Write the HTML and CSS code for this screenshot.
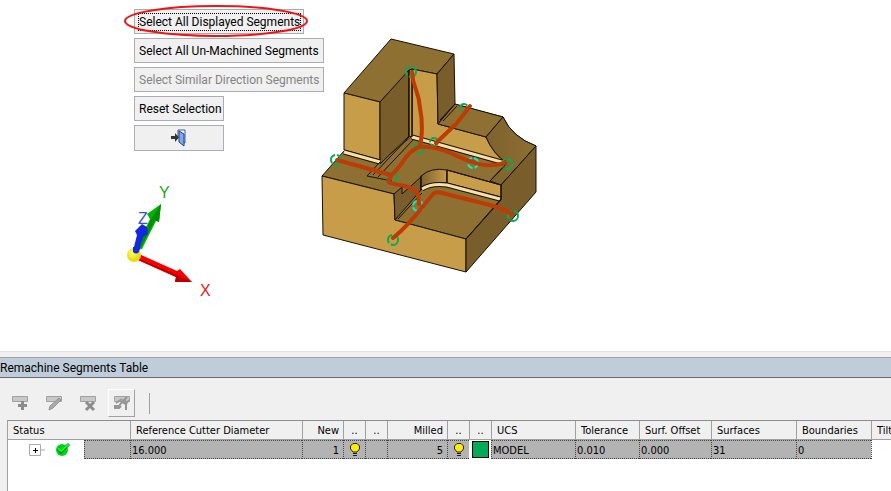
FILE: index.html
```html
<!DOCTYPE html>
<html lang="en">
<head>
<meta charset="utf-8">
<title>Remachine Segments</title>
<link rel="stylesheet" href="styles.css">
</head>
<body>
<main class="scene">
  <svg class="canvas" role="img" aria-label="Machined part with selected segments">
    <defs>
      <linearGradient id="curve" x1="0" x2="1"><stop offset="0" stop-color="#7d612d"/><stop offset="1" stop-color="#8f7033"/></linearGradient>
      <linearGradient id="fillet" x1="0" x2="1"><stop offset="0" stop-color="#7d612d"/><stop offset="1" stop-color="#c89d49"/></linearGradient>
      <radialGradient id="ball" cx=".4" cy=".35"><stop offset="0" stop-color="#ffff60"/><stop offset="1" stop-color="#e8dc10"/></radialGradient>
    </defs>
    <g class="part">
      <path class="top" d="M322 176L344 151L380 162L412 136L454 104L503 117Q512 137 536 146L501 200L466 239L395 220L394 194Z"/>
      <path class="top" d="M391 39L454 54L437 74L412 69L380 102L344 93Z"/>
      <path class="light" d="M344 93L380 102V160L344 150Z"/>
      <path class="dark" d="M380 102L409 70V136L380 164Z"/>
      <path class="light" d="M412 69L437 74L438 124L486 137Q493 154 507 163L412 136Z"/>
      <path class="dark" d="M437 74L454 54L455 104L438 124Z"/>
      <path class="top" d="M455 104L503 117L486 137L438 124Z"/>
      <path class="curved" d="M503 117Q512 137 536 146L501 185L490 181L507 163Q493 154 486 137Z"/>
      <path class="light" d="M322 176L394 194L395 220L466 239V272L323 235Z"/>
      <path class="dark" d="M536 146V192L466 272V239L501 200V185Z"/>
      <path class="dark" d="M394 194L402 187V194L421 177V190L395 220Z"/>
      <path class="fillet" d="M421 176Q431 167 447 170V183Q430 181 421 190Z"/>
      <path class="light" d="M447 170L501 185V197L447 183Z"/>
      <path class="light" d="M409 70L412 69V136L409 137Z"/>
    </g>
    <g class="strip-edge"><path d="M344 152L380 162M412 137L505 163M422 189Q431 183 447 185L500 199"/></g>
    <g class="strip"><path d="M344 152L380 162M412 137L505 163M422 189Q431 183 447 185L500 199"/></g>
    <g class="edges">
      <path d="M409 70V136M412 69V137M440 120L455 104M443 121L457 106"/>
      <path d="M380 162L367 176L392 181M373 175L409 137M378 177L413 140M398 219L422 193M421 176V190M447 170V183"/>
      <path d="M447 170L501 185M490 181L507 163M501 185V199L466 239"/>
    </g>
    <g class="nodes">
      <circle cx="336" cy="160" r="5"/><circle cx="411" cy="72" r="5"/><circle cx="392" cy="177" r="5"/>
      <circle cx="419" cy="148" r="5"/><circle cx="464" cy="108" r="4"/><circle cx="434" cy="142" r="4"/>
      <circle cx="507" cy="164" r="5"/><circle cx="513" cy="216" r="5"/><circle cx="393" cy="240" r="5"/>
      <circle class="cyan" cx="473" cy="163" r="5"/><circle class="cyan" cx="418" cy="206" r="5"/>
    </g>
    <g class="segments">
      <path d="M412 72C413 90 419 90 420 108C423 122 422 138 420 145"/>
      <path d="M470 106L457 123L436 143"/>
      <path d="M337 160L391 175C402 168 405 152 419 147C442 145 457 158 473 162Q486 168 505 163"/>
      <path d="M391 177C382 184 397 184 405 186C416 189 419 192 419 204"/>
      <path d="M393 238C412 223 424 204 433 194Q436 191 442 193L490 205Q502 208 512 214"/>
    </g>
    <g class="axes">
      <text class="z" x="138" y="224">Z</text>
      <text class="y" x="159" y="198">Y</text>
      <text class="x" x="200" y="296">X</text>
      <path class="green" d="M135 250L150 219L147 214L161 204L159 222L156 221L142 249Z"/>
      <path class="green-shade" d="M151 219L161 204L159 222L155 220L141 247L137 251Z"/>
      <path class="red" d="M139 254L177 271L180 269L192 282L175 282L176 277L138 260Z"/>
      <path class="red-shade" d="M139 259L177 275L192 282L175 282L176 277L138 260Z"/>
      <path class="blue" d="M133 251L137 235L135 231L142 224L147 227L148 234L143 237L139 251Q136 255 133 251Z"/>
      <circle cx="134" cy="255" r="7" fill="url(#ball)"/>
      <path class="blue" d="M133 247H140L139 252Q136 255 133 252Z"/>
    </g>
  </svg>
  <div class="actions">
    <button class="action first" type="button"><span class="focus">Select All Displayed Segments</span></button>
    <button class="action wide" type="button">Select All Un-Machined Segments</button>
    <button class="action wide" type="button" disabled>Select Similar Direction Segments</button>
    <button class="action" type="button">Reset Selection</button>
    <button class="action exit" type="button" aria-label="Exit">
      <svg width="18" height="18" viewBox="0 0 18 18"><path d="M8 8V1H15V14H13" fill="#fff" stroke="#3a5b9a"/><path d="M9 2L14 5V17L9 13Z" fill="#7da7f5" stroke="#23427d"/><path d="M1 7H5V4L9 8.500L5 13V10H1Z" fill="#333"/></svg>
    </button>
    <svg class="callout" width="188" height="36"><ellipse cx="94" cy="18" rx="91" ry="15"/></svg>
  </div>
</main>
<section class="panel">
  <h1 class="title">Remachine Segments Table</h1>
  <div class="toolbar">
    <button class="tool" type="button" aria-label="Add"><svg width="20" height="20"><path class="plate" d="M2.500 3.500H17.500V8.500H2.500Z"/><path class="mark" d="M12.500 8V17M8 12.500H17"/></svg></button>
    <button class="tool" type="button" aria-label="Edit"><svg width="20" height="20"><path class="plate" d="M2.500 3.500H17.500V8.500H2.500Z"/><path class="pencil" d="M15 5L17 7L9 15L5 17L6 13Z"/></svg></button>
    <button class="tool" type="button" aria-label="Delete"><svg width="20" height="20"><path class="plate" d="M2.500 3.500H17.500V8.500H2.500Z"/><path class="mark" d="M8 9L16 17M16 9L8 17"/></svg></button>
    <button class="tool raised" type="button" aria-label="Select segments"><svg width="20" height="20"><path class="plate" d="M2.500 3.500H17.500V8.500H2.500Z"/><path class="runner" d="M2 13H7L10 9L15 4M4 10L10 6M10 9L14 11V17M14 11L17 7M9 13L7 15H2M10 9L13 6V11"/></svg></button>
    <span class="divider"></span>
  </div>
  <div class="grid">
    <table class="segments-table">
      <colgroup><col class="w-status"><col class="w-cutter"><col class="w-new"><col class="w-icon"><col class="w-icon"><col class="w-milled"><col class="w-icon"><col class="w-icon"><col class="w-ucs"><col class="w-tol"><col class="w-offset"><col class="w-surfaces"><col class="w-bound"><col class="w-tilt"></colgroup>
      <thead><tr><th class="status-head">Status</th><th>Reference Cutter Diameter</th><th class="num">New</th><th class="dots">..</th><th class="dots">..</th><th class="num">Milled</th><th class="dots">..</th><th class="dots">..</th><th>UCS</th><th>Tolerance</th><th>Surf. Offset</th><th>Surfaces</th><th>Boundaries</th><th>Tilt</th></tr></thead>
      <tbody><tr>
        <td class="status"><div class="status-row">
          <button class="expand" type="button" aria-label="Expand"><svg width="16" height="12"><path d="M.5.5H11.500V11.500H.5Z" fill="#fff" stroke="#aaa"/><path d="M12 6H16" stroke="#aaa"/><path d="M4 6.500H9M6.500 4V9" stroke="#000"/></svg></button>
          <svg class="ok" width="16" height="16"><circle cx="7" cy="8" r="6" fill="#00d419"/><path d="M3 6L6 10L14 2" fill="none" stroke="#007c14" stroke-width="3"/><path d="M3 6L6 9L14 2" fill="none" stroke="#13fb32" stroke-width="2"/></svg>
          <span class="status-fill"></span></div></td>
        <td>16.000</td><td class="num">1</td>
        <td class="icon"><svg width="12" height="14"><path class="bulb" d="M4 9L1.500 6V3L4 .5H8L10.500 3V6L8 9Z"/><path class="base" d="M4 10.500H8M4 12.500H8"/></svg></td>
        <td></td><td class="num">5</td>
        <td class="icon"><svg width="12" height="14"><path class="bulb" d="M4 9L1.500 6V3L4 .5H8L10.500 3V6L8 9Z"/><path class="base" d="M4 10.500H8M4 12.500H8"/></svg></td>
        <td class="color"><span class="swatch"></span></td>
        <td>MODEL</td><td>0.010</td><td>0.000</td><td>31</td><td>0</td><td class="blank"></td>
      </tr></tbody>
    </table>
  </div>
</section>
</body>
</html>
```

FILE: styles.css
```css
* { box-sizing: border-box; }
body {
  margin: 0;
  min-height: 100vh;
  display: flex;
  flex-direction: column;
  overflow: hidden;
  background: #fff;
  color: #000;
  font: 12px/16px Roboto, "Open Sans", sans-serif;
}
button { font: inherit; color: inherit; }
.scene { position: relative; border-bottom: 1px solid #e3e3e3; }
.canvas { display: block; width: 100%; height: 351px; }

.part path { stroke: #171006; stroke-width: 1; stroke-linejoin: round; }
.top { fill: #8f7033; }
.light { fill: #c89d49; }
.dark { fill: #795d2b; }
.part .curved { fill: url(#curve); }
.part .fillet { fill: url(#fillet); }
.strip, .strip-edge, .edges, .segments, .nodes { fill: none; }
.strip-edge { stroke: #171006; stroke-width: 5; }
.strip { stroke: #f7dfa8; stroke-width: 3; }
.edges { stroke: #171006; }
.segments { stroke: #bd3b05; stroke-width: 4; stroke-linecap: round; stroke-linejoin: round; }
.nodes { stroke: #08aa56; stroke-width: 2; stroke-dasharray: 10 2; }
.nodes .cyan { stroke: #12e8bd; stroke-dasharray: 6 2; }
.axes { font: 16px "Liberation Sans", sans-serif; }
.x { fill: #e92020; }
.y { fill: #20a820; }
.z { fill: #3850cf; }
.green { fill: #00b400; }
.green-shade { fill: #008c08; }
.red { fill: #f80000; }
.red-shade { fill: #b80000; }
.blue { fill: #1428e0; }

.actions {
  position: absolute;
  top: 9px;
  left: 134px;
  display: flex;
  flex-direction: column;
  align-items: flex-start;
  gap: 4px;
}
.action {
  display: flex;
  align-items: center;
  justify-content: flex-start;
  width: 90px;
  height: 25px;
  padding: 0 4px;
  border: 1px solid #acacb4;
  background: #f0f0f0;
  white-space: nowrap;
}
.action:disabled { color: #838383; }
.first { width: 170px; }
.wide { width: 190px; }
.focus { flex: 1; text-align: left; outline: 1px dotted #000; }
.exit { height: 26px; justify-content: center; }
.callout { position: absolute; top: -6px; left: -12px; pointer-events: none; }
.callout ellipse { fill: none; stroke: #f01414; stroke-width: 2; }

.panel { flex: 1; display: flex; flex-direction: column; padding-top: 5px; background: #f0f0f0; }
.title {
  margin: 0;
  height: 21px;
  border-top: 1px solid #a0a0a0;
  border-bottom: 1px solid #696969;
  background: #bfcddb;
  font-size: 12px;
  font-weight: 400;
  line-height: 20px;
}
.toolbar { display: flex; align-items: center; gap: 6px; height: 42px; padding: 8px 6px 0; }
.tool { display: flex; align-items: center; justify-content: center; width: 28px; height: 28px; padding: 0; border: 0; background: none; }
.raised { width: 27px; border: 1px solid; border-color: #fff #a0a0a0 #a0a0a0 #fff; }
.divider { width: 1px; height: 21px; margin-left: 8px; background: #a0a0a0; }
.plate { fill: #c8c8c8; stroke: #a0a0a0; }
.mark { stroke: #8c8c8c; stroke-width: 3; }
.pencil { fill: #aaa; stroke: #929292; }
.runner { fill: none; stroke: #969696; stroke-width: 2; }

.grid {
  flex: 1;
  margin-left: 7px;
  overflow: hidden;
  border-top: 1px solid #8c8c8c;
  border-left: 1px solid #a0a0a0;
  background: #fff;
  font: 11px/14px "DejaVu Sans Condensed", "Noto Sans", sans-serif;
}
.segments-table { width: max-content; table-layout: fixed; border-spacing: 0; }
.w-status { width: 122px; }
.w-cutter { width: 172px; }
.w-new { width: 41px; }
.w-icon { width: 22px; }
.w-milled { width: 60px; }
.w-ucs { width: 84px; }
.w-tol { width: 64px; }
.w-offset { width: 72px; }
.w-surfaces { width: 85px; }
.w-bound { width: 75px; }
.w-tilt { width: 60px; }
th {
  height: 19px;
  padding: 2px 0 0 5px;
  border-left: 1px solid #a0a0a0;
  border-bottom: 1px solid #a0a0a0;
  background: #f0f0f0;
  font-weight: 400;
  text-align: left;
  white-space: nowrap;
}
.status-head { border-left: 0; }
.dots { padding: 2px 0 0; text-align: center; }
td {
  height: 19px;
  padding: 2px 0 0 1px;
  border: 1px dotted #444;
  border-right: 0;
  background: #b3b3b3;
  white-space: nowrap;
}
th.num, td.num { padding: 2px 4px 0 0; text-align: right; }
.status { border: 0; background: #fff; padding: 0; }
.status-row { display: flex; align-items: center; height: 19px; padding-left: 21px; }
.expand { display: flex; padding: 0; border: 0; background: none; }
.ok { margin: 0 13px 0 10px; }
.status-fill { flex: 1; height: 19px; border: 1px dotted #444; border-right: 0; background: #b3b3b3; }
.icon { padding: 0; text-align: center; }
.icon svg { display: block; margin: auto; }
.bulb { fill: #ffed00; stroke: #222; }
.base { stroke: #222; }
.color { padding: 0; border: 0; background: #fff; }
.swatch { display: block; width: 17px; height: 17px; margin: auto; border: 1px solid #000; background: #00ab58; }
.blank { border-width: 0 0 0 1px; background: #fff; }
```
